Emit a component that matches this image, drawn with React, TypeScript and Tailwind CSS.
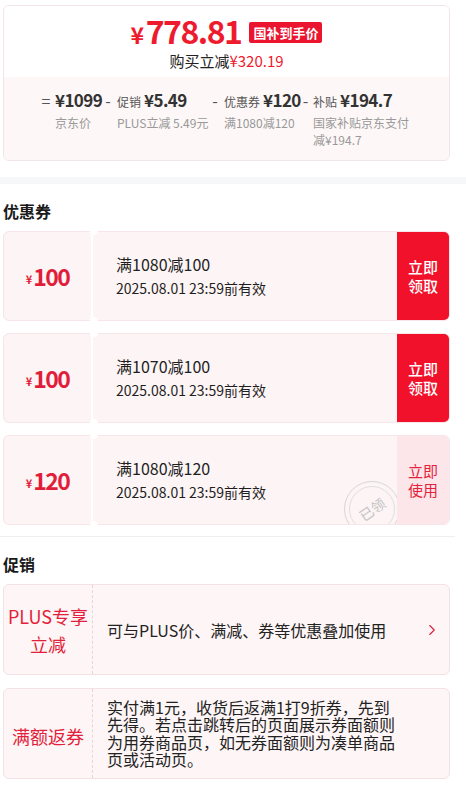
import { ChevronRight } from "lucide-react";

const groups = [
  { op: "=", label: "", value: "¥1099", sub: "京东价", w: "w-[47px]", opw: "w-[12px]" },
  { op: "-", label: "促销", value: "¥5.49", sub: "PLUS立减 5.49元", w: "w-[92px]", opw: "w-[12px]" },
  { op: "-", label: "优惠券", value: "¥120", sub: "满1080减120", w: "w-[77px]", opw: "w-[12px]" },
  { op: "-", label: "补贴", value: "¥194.7", sub: "国家补贴京东支付减¥194.7", w: "w-[97px]", opw: "w-[9px]" },
];

const coupons = [
  { amount: "100", title: "满1080减100", claimed: false },
  { amount: "100", title: "满1070减100", claimed: false },
  { amount: "120", title: "满1080减120", claimed: true },
];

function Coupon({ amount, title, claimed }: { amount: string; title: string; claimed: boolean }) {
  return (
    <div className="relative ml-[3px] w-[447px]">
      <div className="relative h-[90px] rounded-[6px] border border-[#f6e6e9] bg-[#fdf4f5] flex overflow-hidden">
        <div className="w-[87px] flex items-center justify-center text-[#e11d3a]">
          <span className="text-[11px] font-semibold leading-none mt-[6px] mr-[1px]">¥</span>
          <span className="text-[23px] font-semibold leading-none tracking-[-1.5px]">{amount}</span>
        </div>
        <div className="w-[2px] bg-white" />
        <div className="flex-1 pl-[23px] flex flex-col justify-center text-[#1f1f1f]">
          <div className="text-[16px] leading-[24px]">{title}</div>
          <div className="text-[14px] leading-[24px]">2025.08.01 23:59前有效</div>
        </div>
        {claimed && (
          <div className="absolute left-[340px] top-[45px] w-[56px] h-[56px] rounded-full border-[1.5px] border-[#d6d6d6] flex items-center justify-center">
            <div className="w-[46px] h-[46px] rounded-full border border-[#dedede] flex items-center justify-center">
              <span className="text-[14px] text-[#c4c4c4] rotate-[-35deg] leading-none">已领</span>
            </div>
          </div>
        )}
        <div
          className={
            claimed
              ? "relative z-10 w-[52px] bg-[#fde6ea] text-[#e4223b] flex items-center justify-center text-center text-[15px] leading-[19px]"
              : "relative z-10 w-[52px] bg-[#f2112b] text-white flex items-center justify-center text-center text-[15px] leading-[19px] font-medium"
          }
        >
          立即
          <br />
          {claimed ? "使用" : "领取"}
        </div>
      </div>
      <div className="absolute left-[87px] -top-[4px] w-[8px] h-[8px] rounded-full bg-white" />
      <div className="absolute left-[87px] -bottom-[4px] w-[8px] h-[8px] rounded-full bg-white" />
    </div>
  );
}

export default function App() {
  return (
    <div className="w-[466px] min-h-[803px] bg-white [font-family:'Noto_Sans_CJK_SC','Noto_Sans',sans-serif] text-[#1f1f1f] pt-[5px]">
      {/* price summary card */}
      <div className="ml-[3px] w-[447px] rounded-[6px] border border-[#f2e5e7] overflow-hidden">
        <div className="bg-white pt-[8px] pb-[6px] flex flex-col items-center">
          <div className="flex items-center h-[36px]">
            <span className="text-[#ee1b2e] font-bold flex items-baseline tracking-[-1.5px] leading-[28px]">
              <span className="text-[23px] mr-[3px]">¥</span>
              <span className="text-[32px]">778.81</span>
            </span>
            <span className="ml-[8px] h-[21px] px-[4px] bg-[#ec1530] text-white text-[13px] font-bold leading-[21px] rounded-[2px]">
              国补到手价
            </span>
          </div>
          <div className="mt-[1px] h-[20px] text-[15px] leading-[20px] text-[#222]">
            购买立减<span className="text-[#ee1b2e]">¥320.19</span>
          </div>
        </div>
        <div className="bg-[#fdf7f7] pt-[11px] pb-[12px] pl-[36px] flex items-start">
          {groups.map((g, i) => (
            <div key={i} className="flex items-start">
              <span className={`${g.opw} h-[24px] text-center text-[16px] leading-[24px] text-[#555] mr-[3px]`}>{g.op}</span>
              <div className={g.w}>
                <div className="h-[24px] flex items-baseline leading-[24px] whitespace-nowrap">
                  {g.label && <span className="text-[12px] leading-[24px] text-[#555] mr-[3px]">{g.label}</span>}
                  <span className="text-[17px] leading-[24px] font-semibold text-[#333] tracking-[-0.6px]">{g.value}</span>
                </div>
                <div className="text-[12px] leading-[17px] text-[#999] mt-[2px]">{g.sub}</div>
              </div>
            </div>
          ))}
        </div>
      </div>

      {/* band */}
      <div className="mt-[16px] h-[7px] bg-[#f6f7f9]" />

      {/* coupons */}
      <div className="mt-[16px] pl-[3px] text-[16px] leading-[22px] font-bold text-[#1a1a1a]">优惠券</div>
      <div className="mt-[9px] flex flex-col gap-[12px]">
        {coupons.map((c, i) => (
          <Coupon key={i} {...c} />
        ))}
      </div>

      <div className="mt-[11px] w-[455px] h-px bg-[#efefef]" />

      {/* promotions */}
      <div className="mt-[16px] pl-[3px] text-[16px] leading-[22px] font-bold text-[#1a1a1a]">促销</div>
      <div className="mt-[9px] flex flex-col gap-[13px]">
        <div className="ml-[3px] w-[447px] h-[91px] rounded-[6px] border border-[#f3e1e4] bg-[#fdf5f6] flex items-center">
          <div className="w-[89px] self-stretch border-r border-dashed border-[#ebd2d6] flex items-center justify-center text-center text-[#e41f3b] text-[18px] leading-[28px]">
            PLUS专享
            <br />
            立减
          </div>
          <div className="flex-1 pl-[14px] text-[16px] leading-[22px] text-[#222]">可与PLUS价、满减、券等优惠叠加使用</div>
          <ChevronRight className="mr-[8px] text-[#e41f3b]" size={18} strokeWidth={1.5} />
        </div>
        <div className="ml-[3px] w-[447px] h-[91px] rounded-[6px] border border-[#f3e1e4] bg-[#fdf5f6] flex items-center">
          <div className="w-[89px] self-stretch border-r border-dashed border-[#ebd2d6] flex items-center justify-center text-center text-[#e41f3b] text-[18px] leading-[28px] pt-[4px]">
            满额返券
          </div>
          <div className="pl-[14px] w-[305px] text-[16px] leading-[17.5px] text-[#222]">
            实付满1元，收货后返满1打9折券，先到先得。若点击跳转后的页面展示券面额则为用券商品页，如无券面额则为凑单商品页或活动页。
          </div>
        </div>
      </div>
    </div>
  );
}
